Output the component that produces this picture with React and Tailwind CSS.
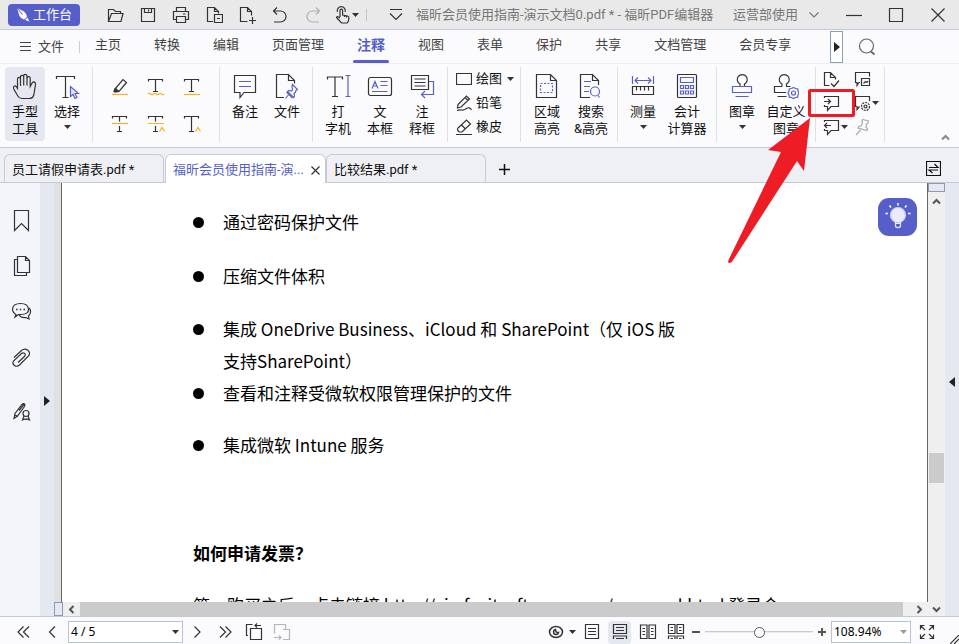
import React, { useState } from "react";
import clsx from "clsx";

const Svg = ({ w = 24, h = 24, children, className }) => (
  <svg
    width={w}
    height={h}
    viewBox={`0 0 ${w} ${h}`}
    fill="none"
    stroke="currentColor"
    strokeWidth="1.2"
    className={clsx("shrink-0", className)}
    aria-hidden="true"
  >
    {children}
  </svg>
);

const Caret = ({ className }) => (
  <Svg w={7} h={4} className={className}>
    <path d="M0 0h7L3.500 4z" fill="currentColor" stroke="none" />
  </Svg>
);

const BLUE = "#5a60cb";
const ORANGE = "#f8b11f";

/* ---------- Title bar ---------- */

const quickActions = [
  {
    label: "打开",
    icon: (
      <Svg w={18} h={18}>
        <path d="M2.500 15.500v-12h5l2 2h5v2.500M2.500 15.500l3-8h11.500l-2 8z" />
      </Svg>
    ),
  },
  {
    label: "保存",
    icon: (
      <Svg w={18} h={18}>
        <path d="M2.500 2.500h13v13h-13zM5.500 2.500v4h7v-4M9.500 3.500v2" />
      </Svg>
    ),
  },
  {
    label: "打印",
    icon: (
      <Svg w={18} h={18}>
        <path d="M4.500 5.500v-4h9v4M4.500 13.500h-3v-8h15v8h-3M4.500 10.500h9v6h-9zM11 8h2.500" />
      </Svg>
    ),
  },
  {
    label: "页面",
    icon: (
      <Svg w={18} h={18}>
        <path d="M8 15.500H2.500v-14h7l4 4v2M9.500 1.500v4h4M9.500 8.500h8v8h-8zM12 12.500h3" />
      </Svg>
    ),
  },
  {
    label: "新建",
    icon: (
      <Svg w={18} h={18}>
        <path d="M9.500 15.500h-7v-14h7l4 4v4M9.500 1.500v4h4M14.500 11v7M11 14.500h7" />
      </Svg>
    ),
  },
  {
    label: "撤销",
    icon: (
      <Svg w={18} h={18}>
        <path d="M6 1.500L2.500 5 6 8.500M2.500 5h7a5.500 5.500 0 0 1 0 11H3" />
      </Svg>
    ),
  },
  {
    label: "重做",
    disabled: true,
    icon: (
      <Svg w={18} h={18}>
        <path d="M12 1.500L15.500 5 12 8.500M15.500 5h-7a5.500 5.500 0 0 0 0 11H15" />
      </Svg>
    ),
  },
];

const TitleBar = () => (
  <header className="flex h-[30px] shrink-0 items-center border-b border-[#c5cad8] bg-[#e9e9e9] text-[13px] text-[#777]">
    <button className="ml-2 flex h-[22px] w-[72px] shrink-0 items-center justify-center gap-[3px] rounded bg-[#565fc9] text-white">
      <Svg w={14} h={15}>
        <path d="M1 1l7 3.500q3 2.500 3 5.500L8 12.500Q5 12 3.500 9z" fill="white" stroke="none" />
        <path d="M11.500 10.500l2 4-4.500-1.500z" fill="white" stroke="none" />
        <path d="M1 1l5.500 6.500" stroke="#565fc9" strokeWidth="1" />
      </Svg>
      工作台
    </button>
    <div className="ml-[18px] flex shrink-0">
      {quickActions.map((action) => (
        <button
          key={action.label}
          aria-label={action.label}
          disabled={action.disabled}
          className={clsx(
            "flex w-[33px] items-center justify-center",
            action.disabled ? "text-[#b0b0b0]" : "text-[#333]"
          )}
        >
          {action.icon}
        </button>
      ))}
    </div>
    <button aria-label="触摸模式" className="ml-[2px] flex w-8 shrink-0 items-center justify-center gap-[2px] text-[#333]">
      <Svg w={15} h={18}>
        <path d="M5 11V4.500a1.300 1.300 0 0 1 2.600 0V9l5 1q1.400.4 1.300 2l-.5 3-1.200 2H6.500L1.500 11.500q.5-1.500 2-.6L5 12M2.500 6a4 4 0 1 1 7.500 0M9.500 9v2M11.500 9.500v2" />
      </Svg>
      <Caret />
    </button>
    <span className="ml-[3px] h-3 w-px shrink-0 bg-[#c4c4c4]" />
    <button aria-label="自定义快速访问栏" className="ml-[11px] flex w-9 shrink-0 items-center justify-center text-[#333]">
      <Svg w={14} h={14}>
        <path d="M1 1.500h12M1 5.500l6 6 6-6" />
      </Svg>
    </button>
    <h1 className="ml-[2px] truncate">福昕会员使用指南-演示文档0.pdf * - 福昕PDF编辑器</h1>
    <button className="ml-auto flex shrink-0 items-center gap-[10px]">
      运营部使用
      <Svg w={12} h={8}>
        <path d="M1.500 1.500L6 6l4.500-4.500" />
      </Svg>
    </button>
    <div className="ml-[13px] flex shrink-0 text-[#333]">
      <button aria-label="最小化" className="flex w-[42px] items-center justify-center">
        <Svg w={16} h={16}>
          <path d="M0 8.500h16" />
        </Svg>
      </button>
      <button aria-label="最大化" className="flex w-[42px] items-center justify-center">
        <Svg w={16} h={16}>
          <path d="M1.500 1.500h13v13h-13z" />
        </Svg>
      </button>
      <button aria-label="关闭" className="flex w-[42px] items-center justify-center">
        <Svg w={16} h={16}>
          <path d="M1.500 1.500l13 13M14.500 1.500l-13 13" />
        </Svg>
      </button>
    </div>
  </header>
);

/* ---------- Menu ---------- */

const menus = ["主页", "转换", "编辑", "页面管理", "注释", "视图", "表单", "保护", "共享", "文档管理", "会员专享"];

const MenuBar = () => {
  const [active, setActive] = useState("注释");
  return (
    <nav className="flex h-[34px] shrink-0 items-center border-b border-[#ececf2] bg-[#fbfbfe] text-[13px] text-[#444]">
      <button className="ml-5 flex shrink-0 items-center gap-[7px]">
        <Svg w={11} h={11}>
          <path d="M0 1.500h11M0 5.500h11M0 9.500h11" strokeWidth="1" />
        </Svg>
        文件
      </button>
      <span className="ml-[15px] h-3 w-px shrink-0 bg-[#ccd]" />
      <div className="ml-[15px] flex shrink-0 gap-[33px] self-stretch">
        {menus.map((menu) => (
          <button
            key={menu}
            onClick={() => setActive(menu)}
            className={clsx("relative pb-[3px]", menu === active && "text-sm font-bold text-[#565fc9]")}
          >
            {menu}
            {menu === active && (
              <span className="absolute inset-x-[-4px] bottom-0 h-[3px] rounded-full bg-[#565fc9]" />
            )}
          </button>
        ))}
      </div>
      <button aria-label="向右滚动" className="ml-[39px] flex h-8 w-[13px] shrink-0 items-center justify-center border border-[#8aa2b4] bg-white text-[#222]">
        <Svg w={6} h={10}>
          <path d="M0 0v10l6-5z" fill="currentColor" stroke="none" />
        </Svg>
      </button>
      <button aria-label="搜索" className="ml-[15px] shrink-0 text-[#666]">
        <Svg w={18} h={18}>
          <circle cx="8.500" cy="8" r="7" />
          <path d="M13 13.500l3.500 3" strokeWidth="1.800" />
        </Svg>
      </button>
    </nav>
  );
};

/* ---------- Ribbon icons ---------- */

const HandIcon = () => (
  <Svg w={26} h={28}>
    <path d="M8.500 13V6q0-1.700-1.500-1.700T5.500 6v9.500L4.500 14q-1-1.500-2.300-.8t-.4 2.800l4 7q1.500 2.500 4 2.500h7.500q3.500 0 4.500-3.500L23.500 11.500q.4-1.800-1-2.400t-2.300.8L18.200 13.500V5.300q0-1.700-1.600-1.700T15 5.300" />
    <path d="M8.500 6V4q0-1.700 1.600-1.700T11.700 4v8.500M11.700 4V3q0-1.700 1.600-1.700T15 3v9.500" />
  </Svg>
);

const SelectIcon = () => (
  <Svg w={26} h={28}>
    <path d="M2.500 6V3.500h18V6M11.500 3.500v21M8.500 24.500h6" />
    <path d="M16.500 13.500v10l2.500-2 2 4 2-1-2-4h3.500z" stroke={BLUE} fill="#e3e5fa" />
  </Svg>
);

const NoteIcon = () => (
  <Svg w={26} h={28}>
    <path d="M2.500 2.500h21v17H12l-4 5v-5H2.500z" />
    <path d="M7 8.500h12M7 13.500h12" stroke={BLUE} />
  </Svg>
);

const FilePinIcon = () => (
  <Svg w={26} h={28}>
    <path d="M10 24.500H2.500v-23h12l6 6v3M14.500 1.500v6h6" />
    <path
      d="M18.500 11.500l5 5-1.500.8-.5 2-1.500 1.200.5 2.500-1 1.500-6-6 1.500-1 2.500.5 1-1.500-.5-3zM15.500 20.500l-4 5M12.500 19l6 6"
      stroke={BLUE}
    />
  </Svg>
);

const TypewriterIcon = () => (
  <Svg w={26} h={28}>
    <path d="M2.500 6.500V4h15v2.500M10 4v19.500M7 23.500h6" />
    <path d="M20.500 2.500h5M23 2.500v21M20.500 23.500h5" stroke={BLUE} />
  </Svg>
);

const TextBoxIcon = () => (
  <Svg w={26} h={28}>
    <rect x="1.500" y="4.500" width="23" height="18" rx="2" />
    <path d="M5 15.500l3-7 3 7M6 13h4M13.500 8.500h7M13.500 12.500h7M5 18.500h15.500" stroke={BLUE} />
  </Svg>
);

const CalloutIcon = () => (
  <Svg w={26} h={28}>
    <path d="M2.500 2.500h17v14h-17zM5.500 6h11M5.500 9.500h11M5.500 13h11" />
    <path d="M20 8.500h4.500v13H13M16 18l-3.500 3.500L16 25" stroke={BLUE} />
  </Svg>
);

const AreaIcon = () => (
  <Svg w={26} h={28}>
    <path d="M2.500 1.500h14l6 6v17h-20zM16.500 1.500v6h6" />
    <rect x="6.500" y="10.500" width="12" height="9" stroke={BLUE} strokeDasharray="2 1.500" />
  </Svg>
);

const SearchFileIcon = () => (
  <Svg w={26} h={28}>
    <path d="M12 24.500H2.500v-23h12l6 6V12M14.500 1.500v6h6" />
    <path d="M6 8.500h7M6 13.500h6M6 18.500h5M20 22.500l1.500 2" stroke={BLUE} />
    <circle cx="17" cy="18.500" r="4.500" stroke={BLUE} />
  </Svg>
);

const MeasureIcon = () => (
  <Svg w={26} h={28}>
    <path d="M2.500 13.500h21v8h-21zM6.500 13.500v4M10.500 13.500v4M14.500 13.500v4M18.500 13.500v4" />
    <path d="M2.500 3v8M23.500 3v8M5 7.500h16M8 4.500l-3 3 3 3M18 4.500l3 3-3 3" stroke={BLUE} />
  </Svg>
);

const CalcIcon = () => (
  <Svg w={26} h={28}>
    <rect x="3.500" y="1.500" width="19" height="23" rx="1" />
    <path
      d="M6.500 4.500h13v5h-13zM6.500 12.500h3v3h-3zM11.500 12.500h3v3h-3zM16.500 12.500h3v3h-3zM6.500 18h3v3h-3zM11.500 18h3v3h-3zM16.500 18h3v3h-3z"
      stroke={BLUE}
    />
  </Svg>
);

const StampIcon = () => (
  <Svg w={26} h={28}>
    <path d="M11 13.500V11a5 5 0 1 1 4.500 0v2.500" />
    <path d="M3.500 13.500h19v6h-19zM6.500 23.500h13" stroke={BLUE} />
  </Svg>
);

const CustomStampIcon = () => (
  <Svg w={26} h={28}>
    <path d="M9 13.500V11a5 5 0 1 1 4.500 0v2.500h4M13 19.500H1.500v-6H9M4.500 23.500h9" />
    <path d="M20.500 14.500l2 1 2.200.3.300 2.200 1 2-1 2-.3 2.200-2.200.3-2 1-2-1-2.200-.3-.3-2.200-1-2 1-2 .3-2.200 2.200-.3z" stroke={BLUE} />
    <circle cx="20.500" cy="20" r="2" stroke={BLUE} />
  </Svg>
);

const MarkIcon = ({ kind }) => (
  <Svg w={20} h={20}>
    {kind === "highlight" && (
      <>
        <path d="M5 12l8-9.500 3.500 3L9 14.500l-4 .5zM5.500 11.500l3.500 3" />
        <path d="M4 14.500l1-2.500 2.500 2.500z" fill={ORANGE} />
        <path d="M2 17.500h16" stroke={ORANGE} />
      </>
    )}
    {kind === "squiggly" && (
      <>
        <path d="M2.500 4.500v-2h14v2M9.500 2.500v12M7 14.500h5" />
        <path d="M2 17q1.300-1.500 2.700 0t2.700 0 2.700 0 2.700 0 2.700 0 2.500 0" stroke={ORANGE} />
      </>
    )}
    {kind === "underline" && (
      <>
        <path d="M2.500 4.500v-2h14v2M9.500 2.500v12M7 14.500h5" />
        <path d="M2 17.500h16" stroke={ORANGE} />
      </>
    )}
    {kind === "strikeout" && (
      <>
        <path d="M2.500 4.500v-2h14v2M9.500 2.500v5M9.500 12v5.500M7 17.500h5" />
        <path d="M2 9.500h16" stroke={ORANGE} />
      </>
    )}
    {kind === "replace" && (
      <>
        <path d="M2.500 4.500v-2h14v2M9.500 2.500v5M9.500 12v5.500M7 17.500h5" />
        <path d="M2 9.500h16M13.500 17.500l2.500-4 2.500 4" stroke={ORANGE} />
      </>
    )}
    {kind === "insert" && (
      <>
        <path d="M2.500 4.500v-2h14v2M9.500 2.500v15M7 17.500h5" />
        <path d="M13.500 17.500l2.500-4 2.500 4" stroke={ORANGE} />
      </>
    )}
  </Svg>
);

const marks = [
  ["highlight", "高亮"],
  ["squiggly", "波浪线"],
  ["underline", "下划线"],
  ["strikeout", "删除线"],
  ["replace", "替换文本"],
  ["insert", "插入文本"],
];

const Tool = ({ icon: Icon, lines, caret, active, className }) => (
  <button
    className={clsx(
      "flex h-[74px] shrink-0 flex-col items-center rounded-sm pt-[6px] leading-[17px]",
      active && "bg-[#e5e8f0]",
      className
    )}
  >
    <span className="mb-[2px] text-[#333]">
      <Icon />
    </span>
    {lines.map((line) => (
      <span key={line} className="whitespace-nowrap">
        {line}
      </span>
    ))}
    {caret && <Caret className="mt-[5px] text-[#333]" />}
  </button>
);

const Group = ({ children, className }) => (
  <div className={clsx("flex h-[75px] shrink-0 border-r border-[#dfe0e8]", className)}>{children}</div>
);

const RowTool = ({ icon, label, caret }) => (
  <button className="flex h-6 items-center gap-1 pl-2">
    <span className="text-[#333]">{icon}</span>
    {label}
    {caret && <Caret className="ml-[1px] text-[#333]" />}
  </button>
);

const commentTools = [
  {
    label: "审阅",
    icon: <path d="M7.500 15.500h-5v-13h6l5 5v2M8.500 2.500v5h5M9 13.500l3 3 5-6" />,
  },
  {
    label: "图像注释",
    icon: <path d="M7 12.500H6l-2 3v-3H2.500v-10h14v4M8.500 8.500h8v7h-8zM10.500 13.500l2-2 1.500 1 1-1.500" />,
  },
  {
    label: "导入注释",
    icon: <path d="M2.500 4V2.500h14v10H9l-3.500 4v-4h-3V11M2 7.500h6.500M6 5l2.500 2.500L6 10" />,
  },
  {
    label: "注释设置",
    caret: true,
    icon: (
      <>
        <path d="M16.500 7V2.500h-14v10H4v3l2.500-3" />
        <circle cx="12.500" cy="12.500" r="4" strokeDasharray="2 1" />
        <circle cx="12.500" cy="12.500" r="1.500" />
      </>
    ),
  },
  {
    label: "导出注释",
    caret: true,
    icon: <path d="M2.500 4V2.500h14v10H9l-3.500 4v-4h-3V11M9 7.500H2.500M5 5L2.500 7.500 5 10" />,
  },
  {
    label: "固定",
    disabled: true,
    icon: <path d="M9.500 1.500l6 1.500-.5 2-1.500 1-.5 3.500 1.500 1-.5 2-9-2.500.8-1.700 2.200-.3 1.500-3-.5-1.500zM7.500 12L3 17" />,
  },
];

const Ribbon = () => (
  <div className="flex h-21 shrink-0 items-start border-b border-[#c5cad8] bg-[#fbfbfe] pt-[3px] text-[13px] text-[#111]">
    <Group className="w-[93px] gap-[2px] pl-[5px]">
      <Tool icon={HandIcon} lines={["手型", "工具"]} active className="w-10" />
      <Tool icon={SelectIcon} lines={["选择"]} caret className="w-10" />
    </Group>
    <Group className="w-[127px] items-end pl-[9px]">
      <div className="grid h-[74px] grid-cols-3 text-[#333]">
        {marks.map(([kind, label]) => (
          <button key={kind} aria-label={label} className="flex w-9 items-center justify-center">
            <MarkIcon kind={kind} />
          </button>
        ))}
      </div>
    </Group>
    <Group className="w-[93px] gap-[2px] pl-[5px]">
      <Tool icon={NoteIcon} lines={["备注"]} className="w-10" />
      <Tool icon={FilePinIcon} lines={["文件"]} className="w-10" />
    </Group>
    <Group className="w-[135px] gap-[2px] pl-[5px]">
      <Tool icon={TypewriterIcon} lines={["打", "字机"]} className="w-10" />
      <Tool icon={TextBoxIcon} lines={["文", "本框"]} className="w-10" />
      <Tool icon={CalloutIcon} lines={["注", "释框"]} className="w-10" />
    </Group>
    <Group className="w-[73px] flex-col">
      <RowTool
        label="绘图"
        caret
        icon={
          <Svg w={16} h={16}>
            <path d="M.5 2.500h15v11H.5z" />
          </Svg>
        }
      />
      <RowTool
        label="铅笔"
        icon={
          <Svg w={16} h={16}>
            <path d="M2 9.500L10.500 1l3 3L5 12l-3.500 1zM9 2.500l3 3M1 15.500q2.500-1 4.500-.5t5-1.500 5 1.500" />
          </Svg>
        }
      />
      <RowTool
        label="橡皮"
        icon={
          <Svg w={16} h={16}>
            <path d="M2 9l8.500-8 4 4L6 13H3.500Q.5 11 2 9zM5.500 6l4 4M0 15.500h16" />
          </Svg>
        }
      />
    </Group>
    <Group className="w-[97px] pl-1">
      <Tool icon={AreaIcon} lines={["区域", "高亮"]} className="w-11" />
      <Tool icon={SearchFileIcon} lines={["搜索", "&高亮"]} className="w-11" />
    </Group>
    <Group className="w-[99px] pl-[3px]">
      <Tool icon={MeasureIcon} lines={["测量"]} caret className="w-11" />
      <Tool icon={CalcIcon} lines={["会计", "计算器"]} className="w-11" />
    </Group>
    <Group className="w-[99px] pl-[3px]">
      <Tool icon={StampIcon} lines={["图章"]} caret className="w-11" />
      <Tool icon={CustomStampIcon} lines={["自定义", "图章"]} className="w-11" />
    </Group>
    <Group className="w-[69px] pl-[6px]">
      <div className="grid h-[72px] grid-cols-2 text-[#333]">
        {commentTools.map((tool) => (
          <button
            key={tool.label}
            aria-label={tool.label}
            disabled={tool.disabled}
            className={clsx("flex w-[31px] items-center", tool.disabled && "text-[#aaa]")}
          >
            <Svg w={19} h={19}>{tool.icon}</Svg>
            {tool.caret && <Caret />}
          </button>
        ))}
      </div>
    </Group>
    <button aria-label="折叠功能区" className="mr-[9px] ml-auto self-end pb-[6px] text-[#888]">
      <Svg w={9} h={7}>
        <path d="M1 5.500L4.500 2 8 5.500" strokeWidth="2" />
      </Svg>
    </button>
  </div>
);

/* ---------- Tabs ---------- */

const TabBar = () => (
  <div className="flex h-[35px] shrink-0 items-end border-b border-[#c5cad8] bg-[#eff0f4] pl-1 text-[13px] text-[#111]">
    <button className="h-7 w-40 rounded-t-md border border-b-0 border-[#c5cad8] pt-[2px] pl-[7px] text-left">员工请假申请表.pdf *</button>
    <div className="ml-px -mb-px flex h-[29px] w-[161px] items-center justify-between rounded-t-md border border-b-0 border-[#c5cad8] bg-white pt-[2px] pr-[5px] pl-[7px] text-[#565fc9]">
      <button>福昕会员使用指南-演...</button>
      <button aria-label="关闭标签" className="text-[#333]">
        <Svg w={9} h={9}>
          <path d="M.5.5l8 8M8.500.5l-8 8" />
        </Svg>
      </button>
    </div>
    <button className="h-7 w-40 rounded-t-md border border-b-0 border-[#c5cad8] pt-[2px] pl-[7px] text-left">比较结果.pdf *</button>
    <button aria-label="新建标签" className="mb-[7px] ml-[13px]">
      <Svg w={11} h={11}>
        <path d="M5.500 0v11M0 5.500h11" strokeWidth="1.500" />
      </Svg>
    </button>
    <button aria-label="切换视图" className="mr-[18px] mb-[6px] ml-auto">
      <Svg w={15} h={15}>
        <path d="M.5.500h14v14H.5zM3 6.500h9L8.500 3M12 9H3l3.500 3" />
      </Svg>
    </button>
  </div>
);

/* ---------- Side panel ---------- */

const panels = [
  {
    label: "书签",
    icon: <path d="M3.500 1.500h14v20l-7-7-7 7z" />,
  },
  {
    label: "页面",
    icon: <path d="M6.500 1.500h8l4 4v12h-12zM14.500 1.500v4h4M6.500 4.500h-3v16h12v-3" />,
  },
  {
    label: "注释",
    icon: (
      <>
        <path d="M5 13.500q-3.500-2-3.500-5.500Q2 2.500 9.500 2.500T17.500 8t-8 5.500H7.500L4 16z" />
        <path d="M18 7q2.500 2.500 1 6l-1.500 2 .5 3-3-1.500q-5 .5-7-2.500" />
        <path d="M5 8.500h1.500M8.700 8.500h1.500M12.500 8.500H14" strokeWidth="1.500" />
      </>
    ),
  },
  {
    label: "附件",
    icon: (
      <path d="M3 10.500l7.500-7q3-2.500 6-.5t1.500 5.500L8.500 18q-2.500 2.200-5 .5t-1-4.500l8-7.500q1.500-1.300 3-.2t.4 2.700L7 15.500" />
    ),
  },
  {
    label: "签名",
    icon: (
      <>
        <path d="M3 17.500l1-5 7-9q1.500-1.500 2.500-.5t0 2.500l-7 9.500zM8 9.500l5-6M4 14l3 1.500" />
        <circle cx="15" cy="12.500" r="3" />
        <path d="M13 15l-1.500 4 2.500-1 1 .5 1-.5 2.500 1L17 15" />
      </>
    ),
  },
];

const SidePanel = () => (
  <aside className="flex shrink-0">
    <div className="flex w-10 flex-col items-center bg-[#f4f5fa] pt-[26px] pl-[3px] text-[#333]">
      {panels.map((panel, i) => (
        <button
          key={panel.label}
          aria-label={panel.label}
          className={clsx(i === 4 ? "mt-[30px]" : i === 0 ? "mt-0" : "mt-[22px]")}
        >
          <Svg w={22} h={24}>{panel.icon}</Svg>
        </button>
      ))}
    </div>
    <button aria-label="展开面板" className="flex w-[14px] items-start bg-[#e4e8f1] pt-[213px] pl-1 text-[#222]">
      <Svg w={6} h={10}>
        <path d="M0 0v10l6-5z" fill="currentColor" stroke="none" />
      </Svg>
    </button>
  </aside>
);

/* ---------- Document ---------- */

const items = [
  ["通过密码保护文件", "pb-[22px]"],
  ["压缩文件体积", "pb-[21px]"],
  ["集成 OneDrive Business、iCloud 和 SharePoint（仅 iOS 版支持SharePoint）", ""],
  ["查看和注释受微软权限管理保护的文件", "pb-5"],
  ["集成微软 Intune 服务", ""],
];

const Bulb = () => (
  <Svg w={30} h={32} className="text-white">
    <circle cx="15" cy="14" r="7.500" fill="#ebebff" stroke="#c9c9f5" />
    <path d="M12.500 20h5v5.500q-2.500 2.500-5 0zM12.500 22.500h5" stroke="#ebebff" />
    <path d="M15 2v2.500M6.500 4.500l1.500 2M23.500 4.500l-1.500 2M2.500 12.500H5M25 12.500h2.500" strokeWidth="1.500" />
  </Svg>
);

const Document = () => (
  <main className="relative min-w-0 flex-1 overflow-hidden border-x border-[#666] bg-white font-['Noto_Sans_CJK_SC',sans-serif] text-[17px] leading-8 text-black">
    <div className="pt-[23px] pl-[131px]">
      <ul className="w-[492px]">
        {items.map(([text, gap]) => (
          <li key={text} className={clsx("flex items-start gap-[19px]", gap)}>
            <span className="mt-[11px] size-[11px] shrink-0 rounded-full bg-black" />
            <span>{text}</span>
          </li>
        ))}
      </ul>
      <h2 className="mt-[76px] font-bold">如何申请发票？</h2>
      <p className="mt-5 whitespace-nowrap">第一购买之后，点击链接 http://vip.foxitsoftware.com/personal.html 登录会</p>
    </div>
    <button
      aria-label="提示"
      className="absolute top-[15px] right-[10px] flex h-[38px] w-[39px] items-center justify-center rounded-[11px] bg-[#565fc9]"
    >
      <Bulb />
    </button>
  </main>
);

const Arrow = ({ d, label, className }) => (
  <button aria-label={label} className={clsx("flex shrink-0 items-center justify-center text-[#555]", className)}>
    <Svg w={9} h={9}>
      <path d={d} strokeWidth="2" />
    </Svg>
  </button>
);

const Workspace = () => (
  <div className="flex min-h-0 flex-1">
    <SidePanel />
    <div className="flex min-w-0 flex-1 flex-col">
      <div className="flex min-h-0 flex-1">
        <div className="w-[7px] shrink-0 bg-[#e0e0e0]" />
        <Document />
      </div>
      <div className="flex h-[14px] shrink-0 bg-[#efefef]">
        <div className="w-[9px] shrink-0 border border-[#9198b4] bg-[#e4e8f1]" />
        <Arrow label="向左" d="M6.500 1L3 4.500 6.500 8" className="w-[17px]" />
        <div className="flex-1 bg-[#cbcbcb]" />
        <Arrow label="向右" d="M2.500 1L6 4.500 2.500 8" className="mr-px ml-2 w-4" />
      </div>
    </div>
    <div className="flex w-[17px] shrink-0 flex-col bg-[#efefef]">
      <div className="h-[9px] border border-[#9198b4] bg-[#e4e8f1]" />
      <Arrow label="向上" d="M1 6.500L4.500 3 8 6.500" className="h-[18px]" />
      <div className="flex-[243]" />
      <div className="mx-px h-[30px] bg-[#cbcbcb]" />
      <div className="flex-[120]" />
      <Arrow label="向下" d="M1 2.500L4.500 6 8 2.500" className="h-[13px]" />
    </div>
    <button aria-label="展开右侧面板" className="flex w-[14px] shrink-0 items-start bg-[#e4e8f1] pt-[194px] pl-1 text-[#222]">
      <Svg w={6} h={10}>
        <path d="M6 0v10L0 5z" fill="currentColor" stroke="none" />
      </Svg>
    </button>
  </div>
);

/* ---------- Status bar ---------- */

const Nav = ({ label, d, className }) => (
  <button aria-label={label} className={clsx("shrink-0", className)}>
    <Svg w={14} h={14}>
      <path d={d} />
    </Svg>
  </button>
);

const viewModes = [
  { label: "单页", d: "M2.500 1.500h13v14h-13zM5 5.500h8M5 8.500h8M5 11.500h8" },
  { label: "连续", active: true, d: "M2.500 1.500h13v9h-13zM5 4.500h8M5 7.500h8M2.500 16v-3h13v3M5 15.500h8" },
  { label: "双页", d: "M1.500 2h6.500v13.500H1.500zM10 2h6.500v13.500H10zM3.500 5.500H6M3.500 8.500H6M3.500 11.500H6M12 5.500h2.500M12 8.500h2.500M12 11.500h2.500" },
  { label: "双页连续", d: "M1.500 1.500h6.500v9H1.500zM10 1.500h6.500v9H10zM3.500 4.500H6M3.500 7.500H6M12 4.500h2.500M12 7.500h2.500M1.500 16v-3H8v3M10 16v-3h6.500v3M3.500 15.500H6M12 15.500h2.500" },
];

const StatusBar = () => {
  const [zoom, setZoom] = useState(51);
  return (
    <footer className="relative flex h-7 shrink-0 items-center border-t border-[#c5cad8] bg-[#fbfbfe] pt-[3px] font-['Noto_Sans','Noto_Sans_CJK_SC',sans-serif] text-xs text-[#333]">
      <Nav label="首页" d="M6.500 1.500L1 7l5.500 5.500M12 1.500L6.500 7l5.500 5.500" className="ml-[17px]" />
      <Nav label="上一页" d="M10 1.500L4.500 7l5.500 5.500" className="ml-[14px]" />
      <select aria-label="页码" className="ml-[9px] h-[22px] w-[115px] shrink-0 appearance-none border border-[#b9c3d6] bg-white pl-[2px] text-black">
        <option>4 / 5</option>
      </select>
      <Caret className="-ml-[11px]" />
      <Nav label="下一页" d="M4.500 1.500L10 7l-5.500 5.500" className="ml-[11px]" />
      <Nav label="末页" d="M2 1.500L7.500 7 2 12.500M7.500 1.500L13 7l-5.500 5.500" className="ml-[14px]" />
      <button aria-label="上一视图" className="ml-[13px]">
        <Svg w={18} h={18}>
          <path d="M5.500 5.500h11v11h-11zM3 12.500H1.500v-11h6M16 2.500h-6M12 .5l-2 2 2 2" />
        </Svg>
      </button>
      <button aria-label="下一视图" disabled className="ml-[10px] text-[#b5b5b5]">
        <Svg w={18} h={18}>
          <path d="M12.500 6.500v-5h-11v9M10 6.500h6.500v10H10M1 14.500h7M6 12.500l2 2-2 2" />
        </Svg>
      </button>

      <button aria-label="护眼模式" className="ml-auto flex items-center gap-[5px]">
        <Svg w={16} h={14}>
          <ellipse cx="8" cy="7" rx="6.500" ry="5.500" strokeWidth="1.500" />
          <path d="M7.500 4.500a2.500 2.500 0 1 0 3 3Q7.500 8 7.500 4.500z" strokeWidth="1.500" />
        </Svg>
        <Caret />
      </button>
      <div className="mr-px ml-1 flex gap-[5px]">
        {viewModes.map((mode) => (
          <button
            key={mode.label}
            aria-label={mode.label}
            className={clsx("flex h-[23px] w-[23px] items-center justify-center rounded-sm", mode.active && "bg-[#e5e8f0]")}
          >
            <Svg w={18} h={18}>
              <path d={mode.d} />
            </Svg>
          </button>
        ))}
      </div>
      <button aria-label="缩小" className="ml-1">
        <Svg w={8} h={8}>
          <path d="M0 4h8" strokeWidth="2" stroke="#555" />
        </Svg>
      </button>
      <input
        type="range"
        aria-label="缩放"
        value={zoom}
        onChange={(e) => setZoom(Number(e.target.value))}
        className="mx-[5px] h-3 w-[108px] shrink-0 appearance-none bg-linear-to-b from-transparent from-42% via-[#bbb] via-42% to-transparent to-58% [&::-webkit-slider-thumb]:size-[11px] [&::-webkit-slider-thumb]:appearance-none [&::-webkit-slider-thumb]:rounded-full [&::-webkit-slider-thumb]:border [&::-webkit-slider-thumb]:border-[#555] [&::-webkit-slider-thumb]:bg-white"
      />
      <button aria-label="放大">
        <Svg w={8} h={8}>
          <path d="M0 4h8M4 0v8" strokeWidth="2" stroke="#555" />
        </Svg>
      </button>
      <select aria-label="缩放比例" className="ml-[5px] h-[22px] w-20 shrink-0 appearance-none border border-[#b9c3d6] bg-white pl-[2px] text-black">
        <option>108.94%</option>
      </select>
      <Caret className="-ml-[11px] text-[#999]" />
      <button aria-label="全屏" className="mr-6 ml-3">
        <Svg w={16} h={16}>
          <path d="M1.500 5.500v-4h4M1.500 1.500L6 6M10.500 1.500h4v4M14.500 1.500L10 6M1.500 10.500v4h4M1.500 14.500L6 10M10.500 14.500h4v-4M14.500 14.500L10 10" />
        </Svg>
      </button>
      <Svg w={9} h={9} className="absolute right-0 bottom-0">
        <path d="M0 9l9-9M4 9l5-5" />
      </Svg>
    </footer>
  );
};

/* Callout drawn over the ribbon */
const Annotation = () => (
  <svg
    width="140"
    height="185"
    viewBox="0 0 140 185"
    className="pointer-events-none absolute top-[84px] left-[723px]"
    aria-hidden="true"
  >
    <rect x="86.500" y="6.500" width="44" height="25" rx="1" fill="none" stroke="#ee1c25" strokeWidth="3" />
    <path d="M87 34L45 66l13 2L5.500 176q-1 3 1 3t3-2L74 77l7 10z" fill="#ee1c25" />
  </svg>
);

const App = () => (
  <div className="relative flex h-screen flex-col overflow-hidden bg-white font-[Roboto,'Noto_Sans_CJK_SC',sans-serif]">
    <TitleBar />
    <MenuBar />
    <Ribbon />
    <TabBar />
    <Workspace />
    <StatusBar />
    <Annotation />
  </div>
);

export default App;
